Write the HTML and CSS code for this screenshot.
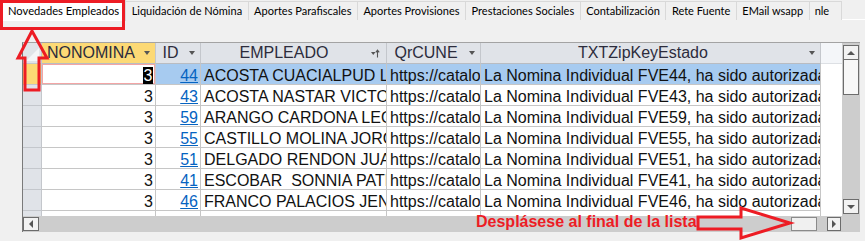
FILE: index.html
```html
<!DOCTYPE html>
<html lang="es">
<head>
<meta charset="utf-8">
<title>Novedades Empleados</title>
<link rel="stylesheet" href="styles.css">
</head>
<body>
<div class="tabs">
  <div class="tab active">Novedades Empleados</div>
  <div class="tab">Liquidación de Nómina</div>
  <div class="tab">Aportes Parafiscales</div>
  <div class="tab">Aportes Provisiones</div>
  <div class="tab">Prestaciones Sociales</div>
  <div class="tab">Contabilización</div>
  <div class="tab">Rete Fuente</div>
  <div class="tab">EMail wsapp</div>
  <div class="tab last">nle</div>
</div>
<div class="panel">
  <div class="sheet">
    <div class="main">
      <div class="grid">
        <div class="row head">
          <div class="sel corner"><span class="corner-tri"></span></div>
          <div class="hc hc-on"><span class="cap">NONOMINA</span><i class="dd"></i></div>
          <div class="hc"><span class="cap">ID</span><i class="dd"></i></div>
          <div class="hc"><span class="cap">EMPLEADO</span><svg class="sorti" width="9" height="9" viewBox="0 0 9 9"><path d="M0 3h4.5L2.25 6z" fill="#555"/><path d="M6.5 8.5V1.5M4.8 3.3L6.5 1.2 8.2 3.3" stroke="#555" stroke-width="1.1" fill="none"/></svg></div>
          <div class="hc"><span class="cap">QrCUNE</span><i class="dd"></i></div>
          <div class="hc"><span class="cap">TXTZipKeyEstado</span><i class="dd"></i></div>
          <div class="hc blank"></div>
        </div>
        <div class="row current">
          <div class="sel sel-on"></div>
          <div class="c num active-cell"><span class="hl">3</span></div>
          <div class="c num"><a class="lnk">44</a></div>
          <div class="c">ACOSTA CUACIALPUD LUIS</div>
          <div class="c">https://catalogo-vpfe.dian.gov.co/document/searchqr</div>
          <div class="c">La Nomina Individual FVE44, ha sido autorizada</div>
          <div class="c blank"></div>
        </div>
        <div class="row">
          <div class="sel"></div>
          <div class="c num">3</div>
          <div class="c num"><a class="lnk">43</a></div>
          <div class="c">ACOSTA NASTAR VICTOR</div>
          <div class="c">https://catalogo-vpfe.dian.gov.co/document/searchqr</div>
          <div class="c">La Nomina Individual FVE43, ha sido autorizada</div>
          <div class="c blank"></div>
        </div>
        <div class="row">
          <div class="sel"></div>
          <div class="c num">3</div>
          <div class="c num"><a class="lnk">59</a></div>
          <div class="c">ARANGO CARDONA LEONARDO</div>
          <div class="c">https://catalogo-vpfe.dian.gov.co/document/searchqr</div>
          <div class="c">La Nomina Individual FVE59, ha sido autorizada</div>
          <div class="c blank"></div>
        </div>
        <div class="row">
          <div class="sel"></div>
          <div class="c num">3</div>
          <div class="c num"><a class="lnk">55</a></div>
          <div class="c">CASTILLO MOLINA JORGE</div>
          <div class="c">https://catalogo-vpfe.dian.gov.co/document/searchqr</div>
          <div class="c">La Nomina Individual FVE55, ha sido autorizada</div>
          <div class="c blank"></div>
        </div>
        <div class="row">
          <div class="sel"></div>
          <div class="c num">3</div>
          <div class="c num"><a class="lnk">51</a></div>
          <div class="c">DELGADO RENDON JUAN</div>
          <div class="c">https://catalogo-vpfe.dian.gov.co/document/searchqr</div>
          <div class="c">La Nomina Individual FVE51, ha sido autorizada</div>
          <div class="c blank"></div>
        </div>
        <div class="row">
          <div class="sel"></div>
          <div class="c num">3</div>
          <div class="c num"><a class="lnk">41</a></div>
          <div class="c">ESCOBAR  SONNIA PATRICIA</div>
          <div class="c">https://catalogo-vpfe.dian.gov.co/document/searchqr</div>
          <div class="c">La Nomina Individual FVE41, ha sido autorizada</div>
          <div class="c blank"></div>
        </div>
        <div class="row">
          <div class="sel"></div>
          <div class="c num">3</div>
          <div class="c num"><a class="lnk">46</a></div>
          <div class="c">FRANCO PALACIOS JENIFER</div>
          <div class="c">https://catalogo-vpfe.dian.gov.co/document/searchqr</div>
          <div class="c">La Nomina Individual FVE46, ha sido autorizada</div>
          <div class="c blank"></div>
        </div>
        <div class="row">
          <div class="sel"></div>
          <div class="c num">3</div>
          <div class="c num"><a class="lnk">47</a></div>
          <div class="c">GARCIA LOPEZ MARIA</div>
          <div class="c">https://catalogo-vpfe.dian.gov.co/document/searchqr</div>
          <div class="c">La Nomina Individual FVE47, ha sido autorizada</div>
          <div class="c blank"></div>
        </div>
      </div>
      <div class="vscroll">
        <div class="sbtn up"><i class="tri-up"></i></div>
        <div class="vthumb"></div>
        <div class="vtrack"></div>
        <div class="sbtn down"><i class="tri-down"></i></div>
      </div>
    </div>
    <div class="hscroll">
      <div class="sbtn left"><i class="tri-left"></i></div>
      <div class="htrack"></div>
      <div class="hthumb"></div>
      <div class="sbtn right"><i class="tri-right"></i></div>
      <div class="hcorner"></div>
    </div>
  </div>
</div>

<svg class="marks" width="865" height="241" viewBox="0 0 865 241">
  <rect x="1.5" y="1.5" width="122" height="27" fill="none" stroke="#ed1c24" stroke-width="3"/>
  <polygon points="32,31 47,58 39,58 39,90 25,90 25,58 18,58" fill="none" stroke="#ed1c24" stroke-width="3" stroke-linejoin="miter"/>
  <polygon points="698,217 741,217 741,208 790,223 741,238 741,229 698,229" fill="none" stroke="#ed1c24" stroke-width="3" stroke-linejoin="miter"/>
</svg>
<div class="note">Desplásese al final de la lista</div>
</body>
</html>
```

FILE: styles.css
```css
* { box-sizing: border-box; }
html, body { margin: 0; padding: 0; }
body {
  width: 865px;
  height: 241px;
  overflow: hidden;
  background: #f0f0f0;
  font-family: "Liberation Sans", Arial, sans-serif;
  position: relative;
}

/* ---------- tab strip ---------- */
.tabs {
  display: flex;
  height: 20px;
  padding-left: 2px;
}
.tab {
  font-family: Lato, "Liberation Sans", sans-serif;
  font-size: 11px;
  color: #000;
  line-height: 18px;
  padding: 0 5.5px;
  margin-top: 1px;
  height: 19px;
  background: #f0f0f0;
  border: 1px solid #d9d9d9;
  border-left: none;
  border-bottom: none;
  white-space: nowrap;
}
.tab.last { padding: 0 12px 0 5px; }
.tab.active {
  background: #fff;
  margin-top: 0;
  height: 21px;
  padding: 1px 6px 0 5px;
  font-size: 11.2px;
  border-left: 1px solid #d9d9d9;
}

/* ---------- panel / datasheet ---------- */
.panel {
  border-top: 1px solid #fff;
  margin-top: -1px;
  padding: 22px 0 0 22px;
}
.sheet {
  width: 838px;
  height: 190px;
  border-left: 1px solid #7a7a7a;
  border-top: 1px solid #a3a3a3;
  display: flex;
  flex-direction: column;
  background: #fff;
}
.main {
  display: flex;
  height: 173px;
}
.grid {
  width: 819px;
  height: 173px;
  overflow: hidden;
  font-size: 16px;
  color: #111;
}
.row {
  display: grid;
  grid-template-columns: 19px 114px 45px 186px 94px 340px 21px;
  height: 21px;
}
.sel {
  background: #e0e3e8;
  border-right: 1px solid #c4c7cc;
  border-bottom: 1px solid #c4c7cc;
}
.sel-on { background: #fcd975; }
.corner { position: relative; overflow: hidden; }
.corner-tri {
  position: absolute;
  right: 2px;
  bottom: 2px;
  width: 0;
  height: 0;
  border-left: 13px solid transparent;
  border-bottom: 13px solid #f4f5f7;
}

.hc {
  display: flex;
  align-items: center;
  padding-right: 5px;
  background: #e0e3e8;
  border-right: 1px solid #c4c7cc;
  border-bottom: 1px solid #b9bcc1;
  color: #2c2c3c;
  white-space: nowrap;
  overflow: hidden;
}
.hc-on { background: #fcd975; }
.hc.blank { background: #f4f6f9; border-right: none; border-bottom: 1px solid #dde0e4; }
.cap { flex: 1; text-align: center; padding-right: 4px; }
.dd {
  width: 0;
  height: 0;
  border-left: 3px solid transparent;
  border-right: 3px solid transparent;
  border-top: 4px solid #555;
}
.sorti { margin-right: 1px; }

.c {
  padding: 2px 3px 0 3px;
  line-height: 19px;
  border-right: 1px solid #c6c6c6;
  border-bottom: 1px solid #c6c6c6;
  white-space: pre;
  overflow: hidden;
}
.c.num { text-align: right; padding-right: 2px; }
.c.blank { border: none; background: #fff; }
.current .c { background: #a7cbf0; }
.current .c.blank { background: #fff; }
.current .c.active-cell {
  background: #fff;
  box-shadow: inset 0 0 0 1px #f3a5a5;
}
.hl { background: #000; color: #fff; padding: 0 0.5px; display: inline-block; line-height: 17px; vertical-align: top; margin-top: 1px; }
.lnk { color: #0563c1; text-decoration: underline; }

/* ---------- scrollbars ---------- */
.vscroll {
  width: 18px;
  display: flex;
  flex-direction: column;
  align-items: center;
  background: #cdcdcd;
  padding: 2px 0;
}
.sbtn {
  background: #f2f2f2;
  border: 1px solid #6c6c6c;
  display: flex;
  align-items: center;
  justify-content: center;
}
.up, .down { width: 16px; height: 15px; }
.vthumb {
  width: 16px;
  height: 35px;
  background: #f7f7f7;
  border: 1px solid #6c6c6c;
  border-top: none;
}
.vtrack { flex: 1; }
.tri-up { width: 0; height: 0; border-left: 4px solid transparent; border-right: 4px solid transparent; border-bottom: 4px solid #555; }
.tri-down { width: 0; height: 0; border-left: 4px solid transparent; border-right: 4px solid transparent; border-top: 4px solid #555; }

.hscroll {
  height: 16px;
  display: flex;
  align-items: center;
  background: #cdcdcd;
}
.left { width: 16px; height: 14px; }
.right { width: 14px; height: 14px; margin-left: 10px; }
.htrack { flex: 1; }
.hthumb {
  width: 26px;
  height: 14px;
  background: #f0f0f0;
  border: 1px solid #8a8a8a;
}
.hcorner { width: 19px; }
.tri-left { width: 0; height: 0; border-top: 4px solid transparent; border-bottom: 4px solid transparent; border-right: 4px solid #555; }
.tri-right { width: 0; height: 0; border-top: 4px solid transparent; border-bottom: 4px solid transparent; border-left: 4px solid #555; }

/* ---------- annotations ---------- */
.marks {
  position: absolute;
  left: 0;
  top: 0;
  pointer-events: none;
}
.note {
  position: absolute;
  left: 476px;
  top: 214px;
  font-family: "Liberation Sans", Arial, sans-serif;
  font-weight: bold;
  font-size: 16px;
  line-height: 16px;
  color: #ed1c24;
  white-space: nowrap;
}
```
